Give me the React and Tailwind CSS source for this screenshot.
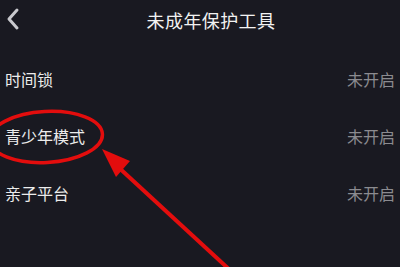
import React from "react";

const rows = [
  { label: "时间锁", value: "未开启" },
  { label: "青少年模式", value: "未开启" },
  { label: "亲子平台", value: "未开启" },
];

export default function App() {
  return (
    <div
      className="relative w-[400px] h-[267px] overflow-hidden bg-[#191921]"
      style={{ fontFamily: '"Noto Sans CJK SC", "Noto Sans", sans-serif' }}
    >
      <div className="relative flex h-[40px] items-center justify-center pl-[22px]">
        <svg
          className="absolute left-[5px] top-[7px]"
          width="16"
          height="24"
          viewBox="0 0 16 24"
          fill="none"
        >
          <path d="M12 3 L4 12 L12 21" stroke="#c9c9ce" strokeWidth="3" strokeLinecap="round" strokeLinejoin="round" />
        </svg>
        <span className="text-[18px] leading-none text-[#f2f2f2] tracking-[0.4px]">未成年保护工具</span>
      </div>
      <div className="flex flex-col pt-[10px]">
        {rows.map((r) => (
          <div key={r.label} className="flex h-[57px] items-center justify-between px-[5px]">
            <span className="text-[16px] leading-none text-[#ececec]">{r.label}</span>
            <span className="text-[16px] leading-none text-[#8b8b90]">{r.value}</span>
          </div>
        ))}
      </div>
      <svg className="absolute left-0 top-0" width="400" height="267" viewBox="0 0 400 267">
        <ellipse cx="46" cy="137" rx="56.5" ry="25.5" fill="none" stroke="#e30d0d" strokeWidth="3.5" transform="rotate(-3 46 137)" />
        <line x1="116" y1="165" x2="232" y2="272" stroke="#e30d0d" strokeWidth="4" />
        <polygon points="102,149 130,161 116,177" fill="#e30d0d" />
      </svg>
    </div>
  );
}
